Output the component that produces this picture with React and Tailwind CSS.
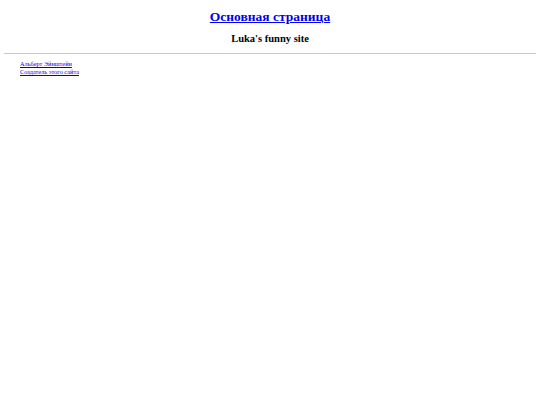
export default function App() {
  return (
    <div className="w-[540px] h-[405px] bg-white" style={{ fontFamily: '"Liberation Serif", "Times New Roman", serif' }}>
      <div className="pt-[9px] text-center text-[13.5px] leading-[16px] font-bold">
        <a href="#" className="text-[#0000ee] underline">Основная страница</a>
      </div>
      <div className="mt-[8px] text-center text-[10.5px] leading-[12px] font-bold text-black">Luka's funny site</div>
      <div className="mx-[4px] mt-[8px] border-t border-[#c8c8c8]"></div>
      <div className="pl-[20px] pt-[6px] flex flex-col items-start text-[6.3px] leading-[8px]">
        <a href="#" className="text-[#0000ee] underline">Альберт Эйнштейн</a>
        <a href="#" className="text-[#0000ee] underline">Создатель этого сайта</a>
      </div>
    </div>
  );
}
